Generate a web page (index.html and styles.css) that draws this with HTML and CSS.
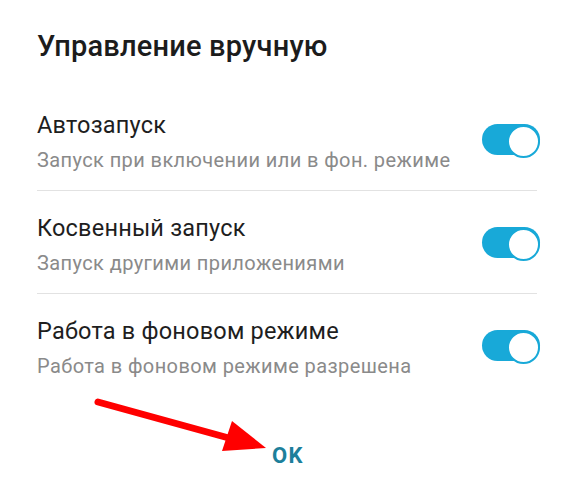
FILE: index.html
```html
<!DOCTYPE html>
<html lang="ru">
<head>
  <meta charset="UTF-8" />
  <meta name="viewport" content="width=device-width, initial-scale=1.0"/>
  <title>Управление вручную</title>
  <link rel="stylesheet" href="styles.css">
</head>
<body>

  <div class="dialog">
    <h1>Управление вручную</h1>

    <!-- Options -->
    <div class="list">
      <div class="row">
        <div class="text">
          <h2>Автозапуск</h2>
          <p>Запуск при включении или в фон. режиме</p>
        </div>
        <span class="switch"></span>
      </div>
      <div class="row">
        <div class="text">
          <h2>Косвенный запуск</h2>
          <p>Запуск другими приложениями</p>
        </div>
        <span class="switch"></span>
      </div>
      <div class="row">
        <div class="text">
          <h2>Работа в фоновом режиме</h2>
          <p>Работа в фоновом режиме разрешена</p>
        </div>
        <span class="switch"></span>
      </div>
    </div>

    <div class="actions">
      <button>OK</button>
    </div>
  </div>

  <!-- Red pointer arrow -->
  <svg class="arrow" width="576" height="498" viewBox="0 0 576 498">
    <line x1="98" y1="402" x2="236" y2="440" stroke="#ff0000" stroke-width="7" stroke-linecap="round"/>
    <polygon points="232,421 222,451 266,448" fill="#ff0000"/>
  </svg>

</body>
</html>
```

FILE: styles.css
```css
* {
  box-sizing: border-box;
  margin: 0;
  padding: 0;
}

body {
  font-family: Roboto, 'Noto Sans', sans-serif;
  background: #fff;
  width: 576px;
  height: 498px;
  overflow: hidden;
  position: relative;
}

.dialog {
  padding: 30px 39px 0 37px;
}

.dialog h1 {
  font-size: 29px;
  line-height: 32px;
  font-weight: 500;
  letter-spacing: 0.2px;
  color: #1c1c1c;
}

.list {
  margin-top: 26px;
}

.row {
  display: flex;
  align-items: center;
  justify-content: space-between;
  padding: 24px 0 19px;
  border-bottom: 1px solid #e2e2e2;
}

.row:last-child {
  border-bottom: none;
}

.row h2 {
  font-size: 23.5px;
  line-height: 26px;
  font-weight: 400;
  letter-spacing: 0.2px;
  color: #1e1e1e;
}

.row p {
  margin-top: 11px;
  font-size: 20px;
  line-height: 22px;
  letter-spacing: 0.4px;
  color: #8a8a8a;
}

.switch {
  position: relative;
  width: 58px;
  height: 31px;
  margin-right: -3px;
  margin-top: -4px;
  border-radius: 16px;
  background: #18a9d8;
  flex-shrink: 0;
}

.switch::after {
  content: '';
  position: absolute;
  top: 1px;
  right: 0;
  width: 29px;
  height: 29px;
  border-radius: 50%;
  background: #fff;
  border: 2px solid #18a9d8;
}

.actions {
  margin-top: 48px;
  text-align: center;
}

.actions button {
  background: none;
  border: none;
  font-family: Roboto, sans-serif;
  font-size: 22px;
  line-height: 24px;
  font-weight: 700;
  letter-spacing: 1.5px;
  color: #1d7f9b;
  margin-left: 2px;
}

.arrow {
  position: absolute;
  top: 0;
  left: 0;
  pointer-events: none;
}
```
